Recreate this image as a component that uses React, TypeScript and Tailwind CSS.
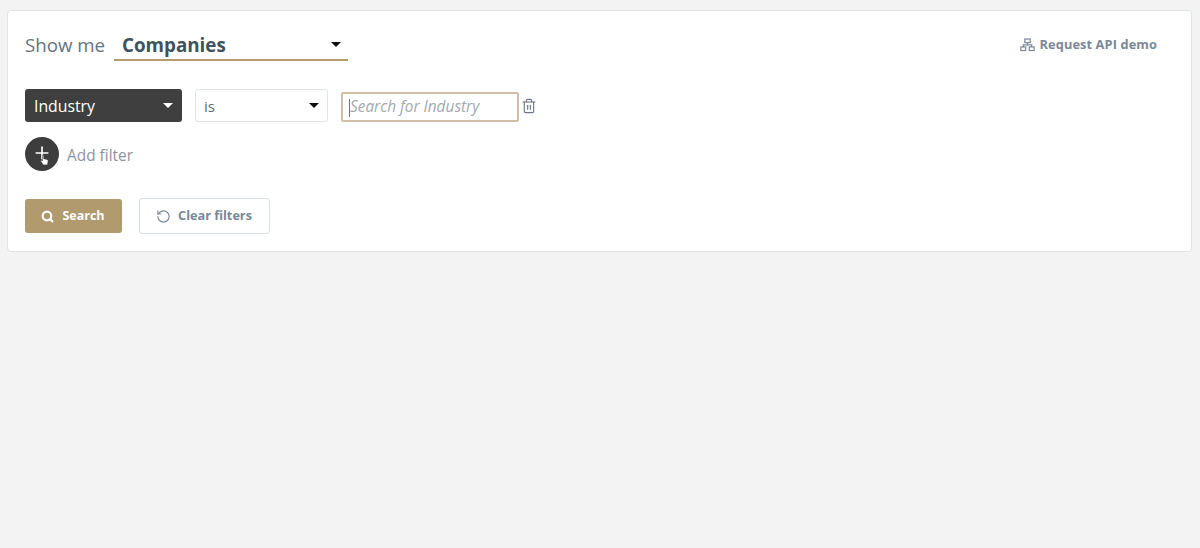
import { Plus, Search, RotateCcw, Trash2 } from "lucide-react";

function Caret({ color }: { color: string }) {
  return (
    <svg width="10" height="5" viewBox="0 0 10 5" className="shrink-0">
      <path d="M0 0h10L5 5z" fill={color} />
    </svg>
  );
}

export default function App() {
  return (
    <div className="h-[548px] w-[1200px] overflow-hidden bg-[#f3f3f3] pl-[7px] pt-[10px] font-['Open_Sans',sans-serif]">
      <div className="flex h-[242px] w-[1185px] flex-col rounded-[4px] border border-[#dfe4e8] bg-white pl-[17px] pr-[33px]">
        {/* top row */}
        <div className="mt-[19px] flex h-[31px] items-start justify-between">
          <div className="flex items-start">
            <span className="w-[89px] text-[18.7px] leading-[29px] text-[#66737f]">Show me</span>
            <div className="flex h-[31px] w-[234px] items-center justify-between border-b-2 border-[#b59c6e] pl-[8px] pr-[7px]">
              <span className="pt-px text-[18.8px] leading-[29px] font-bold text-[#3f5261]">Companies</span>
              <Caret color="#111111" />
            </div>
          </div>
          <div className="mt-[6px] mr-px flex items-center gap-[5px] text-[#7b8898]">
            <svg width="15" height="14" viewBox="0 0 16 15" fill="none" stroke="currentColor" strokeWidth="1.3">
              <rect x="5.1" y="1.1" width="5.8" height="3.8" />
              <rect x="0.9" y="9.6" width="5.2" height="3.8" />
              <rect x="9.9" y="9.6" width="5.2" height="3.8" />
              <path d="M8 5v2.3M3.5 9.6V7.3h9v2.3" />
            </svg>
            <span className="text-[12.8px] leading-[17px] font-bold tracking-[0.1px]">Request API demo</span>
          </div>
        </div>

        {/* filter row */}
        <div className="mt-[28px] flex h-[33px] items-center">
          <div className="flex h-[33px] w-[157px] items-center justify-between rounded-[3px] bg-[#3f3f3f] pl-[9px] pr-[9px]">
            <span className="pt-[2px] text-[15.8px] text-white">Industry</span>
            <Caret color="#ffffff" />
          </div>
          <div className="ml-[13px] flex h-[33px] w-[133px] items-center justify-between rounded-[3px] border border-[#e0e6ea] bg-white pl-[8px] pr-[8px]">
            <span className="pt-[2px] text-[15px] text-[#5d6b79]">is</span>
            <Caret color="#111111" />
          </div>
          <div className="relative mt-[2px] ml-[13px] flex h-[30px] w-[178px] items-center rounded-[2px] border-2 border-[#d0bfa6] bg-white pl-[7px]">
            <span className="absolute top-[5px] left-[6px] h-[18px] w-px bg-[#6b7280]" />
            <span className="text-[15.4px] text-[#a2a9b0] italic">Search for Industry</span>
          </div>
          <Trash2 size={16} strokeWidth={1.7} className="ml-[2px] text-[#6d7886]" />
        </div>

        {/* add filter */}
        <div className="mt-[15px] flex h-[34px] items-center">
          <div className="relative flex h-[34px] w-[34px] items-center justify-center rounded-full bg-[#3d3d3d]">
            <Plus size={20} strokeWidth={2} className="-translate-y-px text-white" />
            <svg width="9" height="12" viewBox="0 0 11 14" className="absolute top-[17px] left-[15px]">
              <path
                d="M3 1.500c0-1 1.500-1 1.500 0v4l4 .8c1 .2 1.500.8 1.400 1.700l-.5 4c-.1.6-.5 1-1 1H4.600c-.5 0-.9-.3-1.100-.7L1 8.500c-.5-.9.6-1.700 1.300-1L3 8.300z"
                fill="#ffffff"
                stroke="#333333"
                strokeWidth="0.6"
              />
            </svg>
          </div>
          <span className="ml-[8px] pt-[4px] text-[15.4px] text-[#8c949d]">Add filter</span>
        </div>

        {/* buttons */}
        <div className="mt-[27px] flex items-center">
          <button className="flex h-[34px] w-[97px] items-center justify-center gap-[7px] rounded-[3px] bg-[#b09a6e] text-white">
            <Search size={13} strokeWidth={4} className="-translate-x-px" />
            <span className="pt-px text-[12.5px] font-bold">Search</span>
          </button>
          <button className="ml-[17px] flex h-[36px] w-[131px] items-center justify-center gap-[6px] rounded-[3px] border border-[#d9e1e6] bg-white text-[#7b8898]">
            <RotateCcw size={15} strokeWidth={1.8} className="-translate-x-px" />
            <span className="text-[12.7px] font-bold">Clear filters</span>
          </button>
        </div>
      </div>
    </div>
  );
}
